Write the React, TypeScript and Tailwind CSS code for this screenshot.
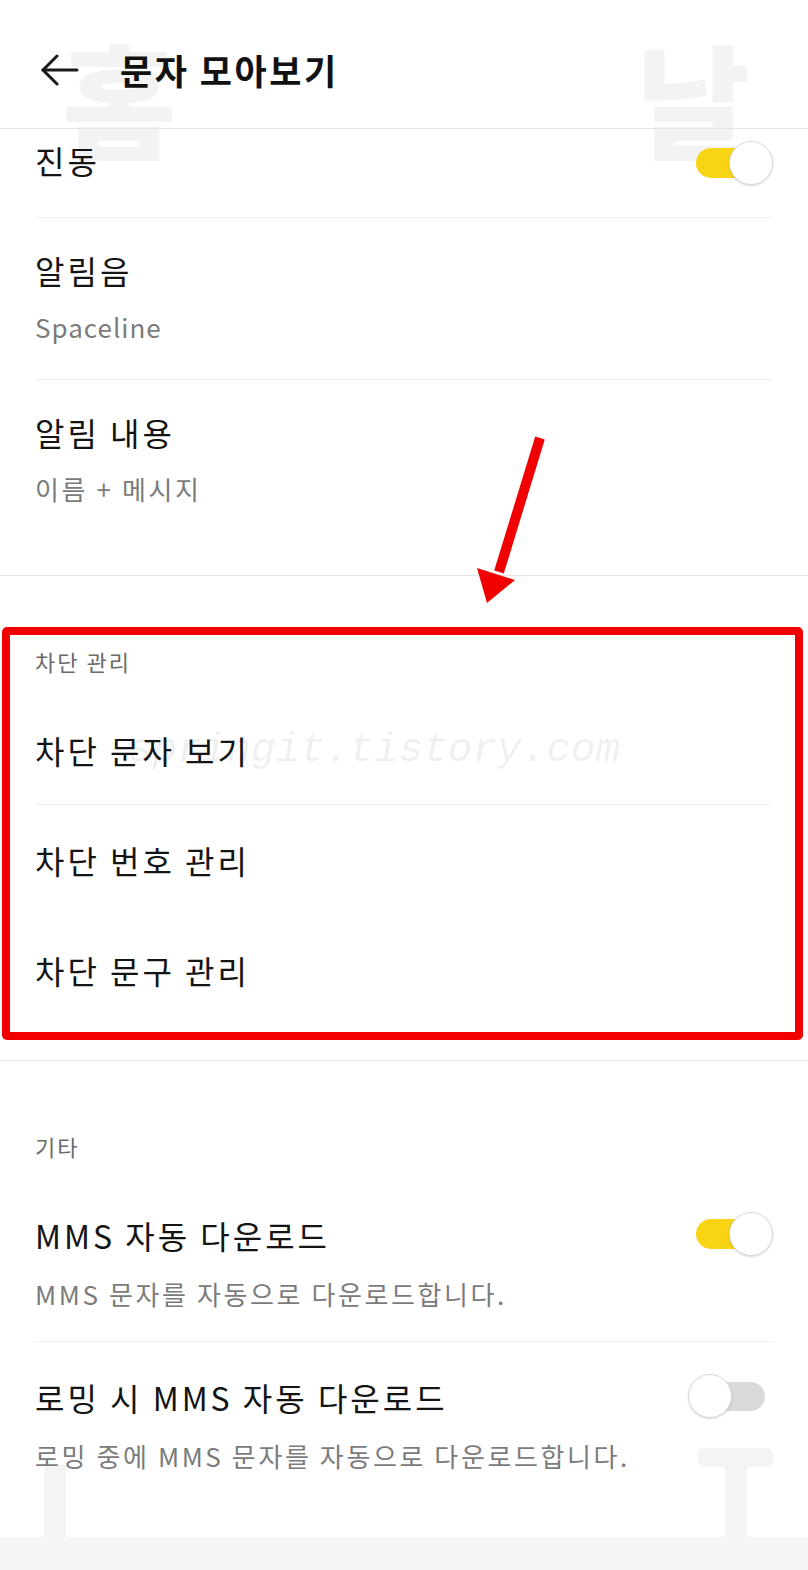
import React from "react";

const font = { fontFamily: '"Noto Sans CJK KR", "Noto Sans", sans-serif' };

function Toggle({ on }: { on: boolean }) {
    if (on) {
        return (
            <div className="relative w-[77px] h-[45px] shrink-0">
                <div className="absolute left-0 top-[7px] w-[62px] h-[30px] rounded-full bg-[#f8d414]" />
                <div className="absolute right-0 top-0 w-[44px] h-[44px] rounded-full bg-white border border-[#d8d8d8] shadow-[0_1px_2px_rgba(0,0,0,0.15)]" />
            </div>
        );
    }
    return (
        <div className="relative w-[77px] h-[45px] shrink-0 mr-[8px]">
            <div className="absolute right-0 top-[8px] w-[65px] h-[29px] rounded-full bg-[#d9d9d9]" />
            <div className="absolute left-0 top-0 w-[44px] h-[44px] rounded-full bg-white border border-[#d8d8d8] shadow-[0_1px_2px_rgba(0,0,0,0.15)]" />
        </div>
    );
}

function TwoLineRow({ title, sub, toggle, border = true, height = "h-[162px]", subTracking = "tracking-[2.6px]" }: { title: string; sub: string; toggle?: boolean; border?: boolean; height?: string; subTracking?: string }) {
    return (
        <div className={`${height} mx-[35px] ${border ? "border-b border-[#eeeeee]" : ""} pt-[32px]`}>
            <div className="flex justify-between items-center">
                <p className="text-[32px] leading-[40px] tracking-[3px] text-[#141414]">{title}</p>
                {toggle !== undefined ? <Toggle on={toggle} /> : null}
            </div>
            <p className={`mt-[20px] text-[26px] leading-[34px] ${subTracking} text-[#7b7b7b]`}>{sub}</p>
        </div>
    );
}

function SingleRow({ title, border }: { title: string; border?: boolean }) {
    return (
        <div className={`h-[110px] mx-[35px] flex items-center ${border ? "border-b border-[#eeeeee] mr-[38px]" : ""}`}>
            <p className="text-[32px] leading-[40px] tracking-[3px] text-[#141414]">{title}</p>
        </div>
    );
}

function SectionHeader({ label }: { label: string }) {
    return (
        <div className="h-[119px] pt-[70px] px-[35px]">
            <p className="text-[22px] leading-[30px] tracking-[2px] text-[#6a6a6a]">{label}</p>
        </div>
    );
}

export default function App() {
    return (
        <div className="relative w-[808px] h-[1570px] bg-white overflow-hidden" style={font}>
            {/* faint watermark letters behind */}
            <div className="absolute left-[62px] top-[28px] text-[124px] leading-[136px] font-black text-[#f3f3f3] select-none">홈</div>
            <div className="absolute left-[636px] top-[28px] text-[124px] leading-[136px] font-black text-[#f3f3f3] select-none">날</div>
            <div className="absolute left-[44px] top-[1465px] w-[22px] h-[72px] bg-[#f4f4f4]" />
            <div className="absolute left-[698px] top-[1448px] w-[75px] h-[19px] rounded-[6px] bg-[#f4f4f4]" />
            <div className="absolute left-[725px] top-[1448px] w-[22px] h-[89px] bg-[#f4f4f4]" />

            <div className="relative flex flex-col h-full">
                <div className="h-[129px] shrink-0 border-b border-[#e4e4e4] flex items-center pt-[11px] pl-[40px]">
                    <svg width="40" height="32" viewBox="0 0 40 32" fill="none" stroke="#1a1a1a" strokeWidth="3" strokeLinecap="round" strokeLinejoin="round">
                        <path d="M3 16 H37" />
                        <path d="M17 2 L3 16 L17 30" />
                    </svg>
                    <h1 className="ml-[40px] text-[35px] leading-[44px] font-bold tracking-[2.5px] text-[#111111]">문자 모아보기</h1>
                </div>

                <div className="border-b border-[#e6e6e6]">
                    <div className="h-[89px] mx-[35px] border-b border-[#eeeeee] flex items-start">
                        <div className="w-full h-[62px] flex items-center justify-between">
                            <p className="text-[32px] leading-[40px] tracking-[3px] text-[#141414]">진동</p>
                            <div className="mt-[6px]"><Toggle on={true} /></div>
                        </div>
                    </div>
                    <TwoLineRow title="알림음" sub="Spaceline" subTracking="tracking-[1px]" />
                    <TwoLineRow title="알림 내용" sub="이름 + 메시지" border={false} height="h-[195px]" />
                </div>

                <div className="border-b border-[#e6e6e6] pb-[35px]">
                    <SectionHeader label="차단 관리" />
                    <SingleRow title="차단 문자 보기" border />
                    <SingleRow title="차단 번호 관리" />
                    <SingleRow title="차단 문구 관리" />
                </div>

                <div className="flex-1">
                    <SectionHeader label="기타" />
                    <TwoLineRow title="MMS 자동 다운로드" sub="MMS 문자를 자동으로 다운로드합니다." toggle={true} />
                    <TwoLineRow title="로밍 시 MMS 자동 다운로드" sub="로밍 중에 MMS 문자를 자동으로 다운로드합니다." toggle={false} border={false} />
                </div>

                <div className="h-[33px] shrink-0 bg-[#f5f5f5]" />
            </div>

            {/* blog watermark */}
            <div
                className="absolute left-[128px] top-[722px] text-[41px] leading-[56px] italic text-[rgba(0,0,0,0.07)] select-none"
                style={{ fontFamily: '"Liberation Mono", monospace' }}
            >
                springit.tistory.com
            </div>

            {/* red annotation */}
            <div className="absolute left-[2px] top-[627px] w-[801px] h-[413px] border-[8px] border-[#f20000] rounded-[5px]" />
            <svg className="absolute left-0 top-0" width="808" height="1570" viewBox="0 0 808 1570">
                <line x1="540" y1="438" x2="499" y2="572" stroke="#f00000" strokeWidth="10" />
                <polygon points="477,568 515,580 487,603" fill="#f00000" />
            </svg>
        </div>
    );
}
